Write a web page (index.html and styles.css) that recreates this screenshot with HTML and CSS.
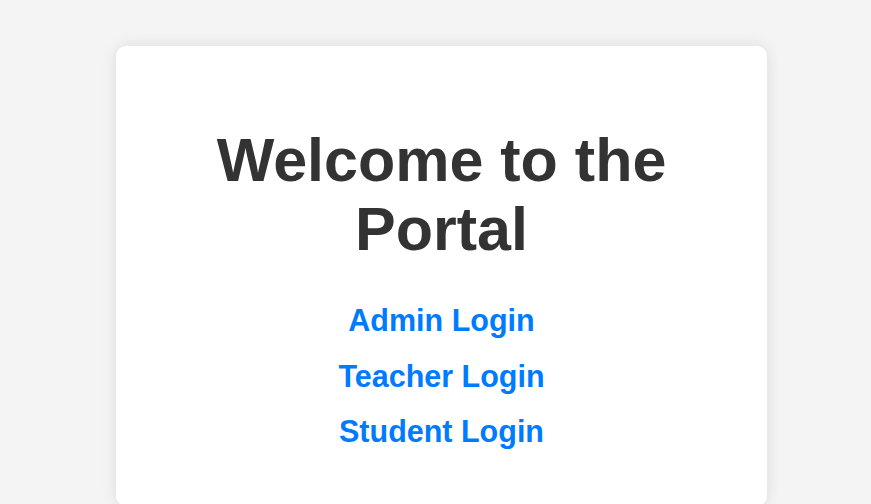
FILE: index.html
```html
<!DOCTYPE html>
<html lang="en">
<head>
<meta charset="utf-8">
<title>Portal</title>
<link rel="stylesheet" href="styles.css">
</head>
<body>
<div class="page">
  <div class="card">
    <h1 class="title">Welcome to the Portal</h1>
    <nav class="links">
      <a class="link" href="#">Admin Login</a>
      <a class="link" href="#">Teacher Login</a>
      <a class="link" href="#">Student Login</a>
    </nav>
  </div>
</div>
</body>
</html>
```

FILE: styles.css
```css
html, body {
  margin: 0;
  padding: 0;
  background: #f4f4f4;
  font-family: "Liberation Sans", Arial, sans-serif;
}
.page {
  display: flex;
  justify-content: center;
  padding: 46px 0 0 12px;
}
.card {
  width: 651px;
  box-sizing: border-box;
  background: #fff;
  border-radius: 10px;
  box-shadow: 0 0 15px rgba(0, 0, 0, 0.1);
  padding: 40px 40px 40px;
  text-align: center;
}
.title {
  font-size: 61px;
  font-weight: bold;
  color: #333;
  margin: 40px 0 39px;
  line-height: 69px;
}
.links {
  display: flex;
  flex-direction: column;
  align-items: center;
  gap: 20.5px;
  margin-bottom: 17px;
}
.link {
  font-size: 30.5px;
  font-weight: bold;
  color: #007bff;
  text-decoration: none;
  line-height: normal;
}
```
